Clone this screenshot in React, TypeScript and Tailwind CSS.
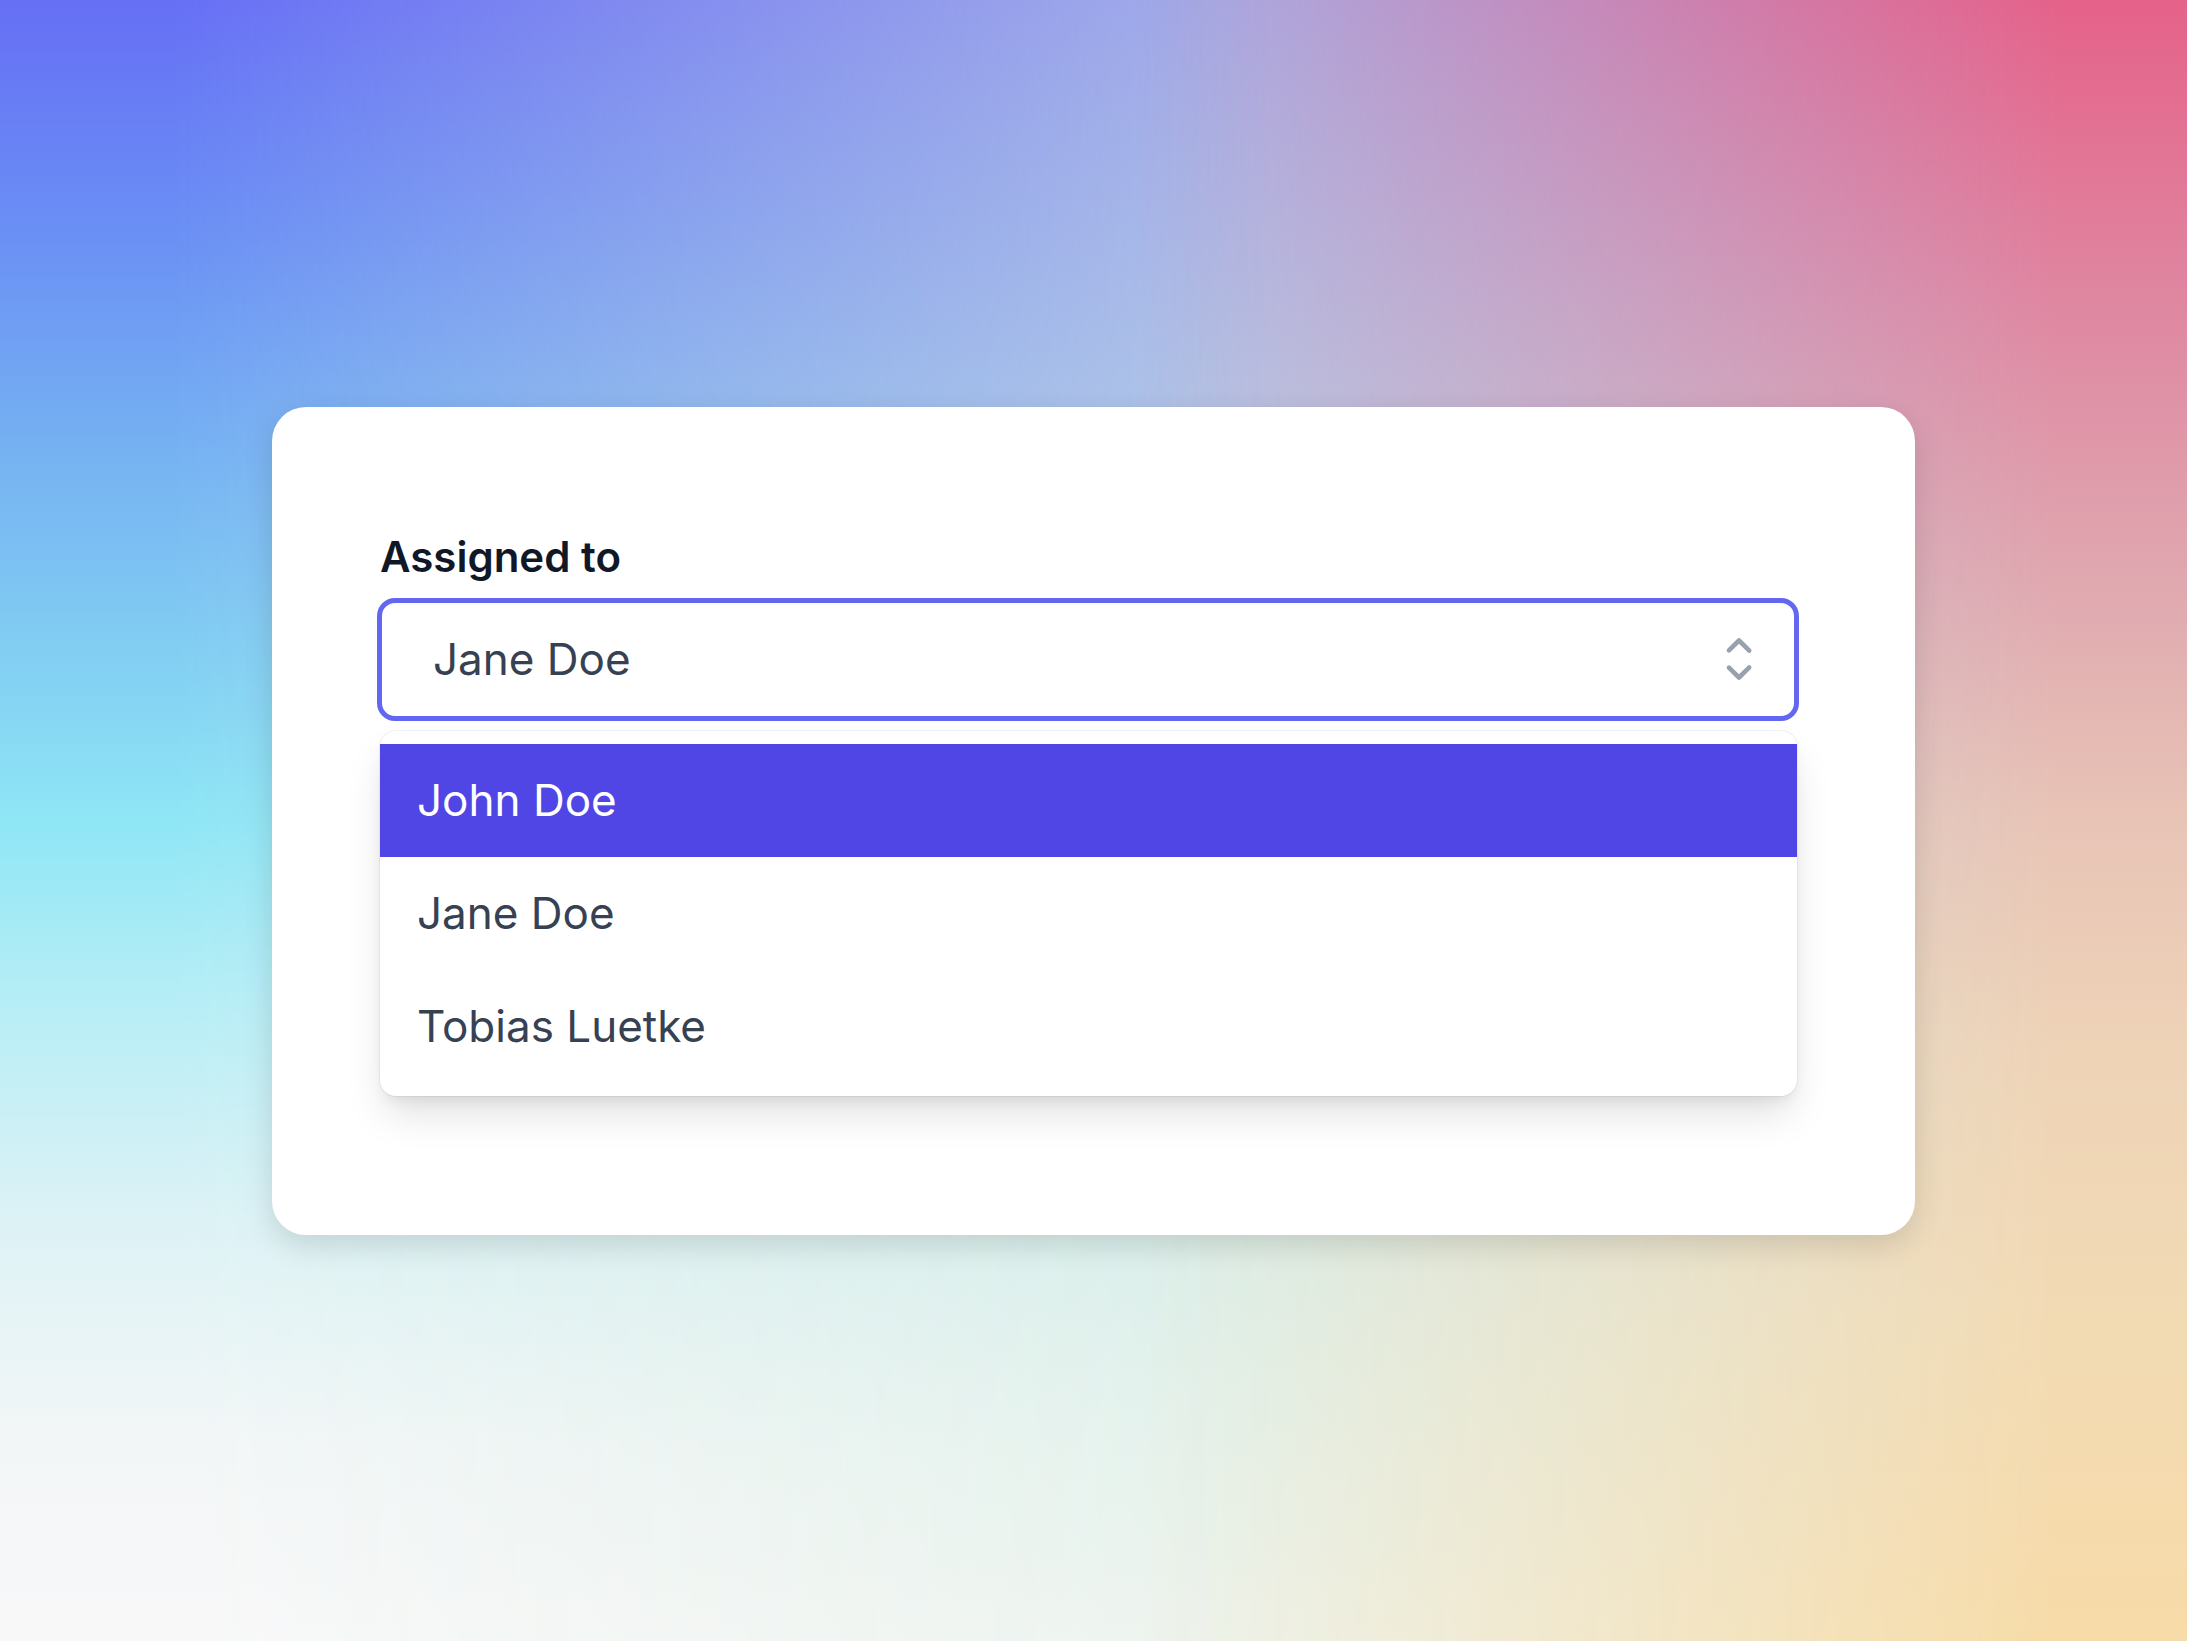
import React from "react";

function ChevronUpDown() {
  return (
    <svg viewBox="0 0 20 20" fill="currentColor" className="h-[62px] w-[62px] text-gray-400" aria-hidden="true">
      <path
        fillRule="evenodd"
        clipRule="evenodd"
        d="M10.53 3.47a.75.75 0 0 0-1.06 0L6.22 6.72a.75.75 0 0 0 1.06 1.06L10 5.06l2.72 2.72a.75.75 0 1 0 1.06-1.06l-3.25-3.25Zm-4.31 9.81 3.25 3.25a.75.75 0 0 0 1.06 0l3.25-3.25a.75.75 0 1 0-1.06-1.06L10 14.94l-2.72-2.72a.75.75 0 0 0-1.06 1.06Z"
      />
    </svg>
  );
}

const people = ["John Doe", "Jane Doe", "Tobias Luetke"];

export default function App() {
  return (
    <div className="grid h-[1641px] w-full overflow-hidden font-['Inter','Noto_Sans',sans-serif]">
      <div className="col-start-1 row-start-1 bg-[linear-gradient(180deg,#a6b0e8_0%,#b3c3e7_22%,#c2d6e7_42%,#d3ece9_65%,#e3f2ec_85%,#edf4ee_100%)]" />
      <div className="col-start-1 row-start-1 bg-[linear-gradient(180deg,#666ff5_0%,#6a8ff4_14%,#76b3f2_28%,#84d3f3_42%,#8fe6f5_50%,#b3edf6_60%,#dcf2f5_74%,#f3f6f7_88%,#f8f8f9_100%)] [mask-image:linear-gradient(to_right,#000_0%,#000_8%,transparent_58%)]" />
      <div className="col-start-1 row-start-1 bg-[linear-gradient(180deg,#e5628a_0%,#df86a1_18%,#e0a9b0_36%,#e8c4b6_50%,#eed3b7_64%,#f2dab4_80%,#f7dba8_100%)] [mask-image:linear-gradient(to_left,#000_0%,#000_6%,transparent_48%)]" />
      <div className="relative z-10 col-start-1 row-start-1 flex items-center justify-center">
        <div className="h-[828px] w-[1643px] rounded-[34px] bg-white pl-[105px] pr-[116px] pt-[125px] shadow-[0_10px_30px_rgba(0,0,0,0.13)]">
          <label className="block pl-[3px] text-[42px] font-semibold leading-[50px] text-gray-900">Assigned to</label>
          <div className="relative mt-[16px]">
            <div className="flex h-[123px] items-center justify-between rounded-[18px] border-[5px] border-[#6366f1] bg-white pl-[51px] pr-[24px]">
              <span className="text-[44px] leading-none text-gray-700">Jane Doe</span>
              <ChevronUpDown />
            </div>
            <ul className="absolute left-[3px] right-[2px] top-[133px] rounded-[16px] bg-white py-[13px] shadow-[0_22px_40px_-6px_rgba(0,0,0,0.13),0_8px_14px_-4px_rgba(0,0,0,0.07)] ring-1 ring-black/5">
              {people.map((p, i) => (
                <li
                  key={p}
                  className={
                    i === 0
                      ? "flex h-[113px] items-center bg-[#4f46e5] pl-[37px] text-[44px] text-white"
                      : "flex h-[113px] items-center pl-[37px] text-[44px] text-gray-700"
                  }
                >
                  {p}
                </li>
              ))}
            </ul>
          </div>
        </div>
      </div>
    </div>
  );
}
